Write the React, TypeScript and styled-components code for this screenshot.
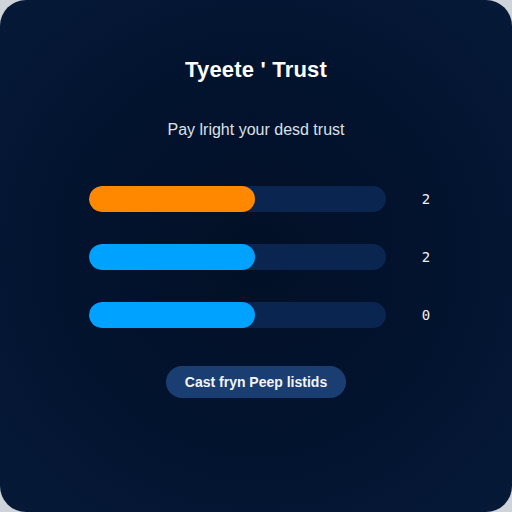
import React from "react";
import styled, { createGlobalStyle } from "styled-components";

const GlobalStyle = createGlobalStyle`
  html, body {
    margin: 0;
    padding: 0;
    background: #cfd3da;
    font-family: "Liberation Sans", Arial, sans-serif;
  }
`;

const Card = styled.div`
  width: 512px;
  height: 512px;
  box-sizing: border-box;
  border-radius: 26px;
  background: radial-gradient(ellipse at 50% 50%, #020f26 0%, #031430 60%, #061a38 100%);
  display: flex;
  flex-direction: column;
  align-items: center;
  padding-top: 57px;
`;

const Title = styled.h1`
  margin: 0;
  font-size: 22px;
  line-height: 26px;
  font-weight: 700;
  color: #ffffff;
  letter-spacing: 0.2px;
`;

const Subtitle = styled.p`
  margin: 37px 0 0;
  font-size: 16px;
  line-height: 19px;
  color: #dbe0e8;
`;

const BarList = styled.div`
  margin-top: 47px;
  display: flex;
  flex-direction: column;
  gap: 32px;
  align-self: flex-start;
  padding-left: 89px;
`;

const BarRow = styled.div`
  display: flex;
  align-items: center;
`;

const Track = styled.div`
  width: 297px;
  height: 26px;
  border-radius: 13px;
  background: #0a2550;
  overflow: hidden;
`;

const Fill = styled.div<{ $color: string }>`
  height: 100%;
  border-radius: 13px;
  background: ${(p) => p.$color};
`;

const Count = styled.span`
  width: 20px;
  margin-left: 30px;
  text-align: center;
  font-family: "DejaVu Sans Mono", monospace;
  font-size: 14px;
  color: #eef1f6;
`;

const Button = styled.button`
  margin-top: 38px;
  width: 180px;
  height: 32px;
  border: none;
  border-radius: 16px;
  background: #1b3e72;
  color: #f2f5fa;
  font-family: "Liberation Sans", Arial, sans-serif;
  font-size: 14px;
  font-weight: 700;
  cursor: pointer;
`;

const bars = [
  { color: "#ff8800", pct: 56, value: "2" },
  { color: "#00a2ff", pct: 56, value: "2" },
  { color: "#00a2ff", pct: 56, value: "0" },
];

export default function App(): React.ReactElement {
  return (
    <>
      <GlobalStyle />
      <Card>
        <Title>Tyeete ' Trust</Title>
        <Subtitle>Pay lright your desd trust</Subtitle>
        <BarList>
          {bars.map((b, i) => (
            <BarRow key={i}>
              <Track>
                <Fill $color={b.color} style={{ width: `${b.pct}%` }} />
              </Track>
              <Count>{b.value}</Count>
            </BarRow>
          ))}
        </BarList>
        <Button>Cast fryn Peep listids</Button>
      </Card>
    </>
  );
}
